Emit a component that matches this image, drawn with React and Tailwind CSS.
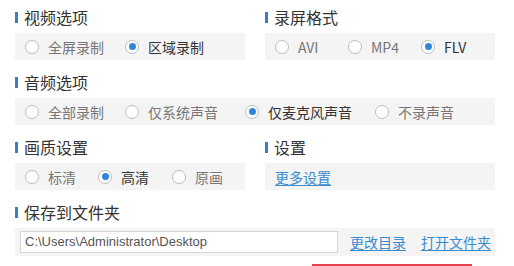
import React from 'react'

function Title({ children }) {
  return (
    <div className="h-[32px] flex items-center">
      <span className="w-[3px] h-[11px] shrink-0 bg-[#3b7ec3] mr-[6px]" />
      <span className="text-[16px] leading-none text-[#333]">{children}</span>
    </div>
  )
}

function Radio({ label, checked, width }) {
  return (
    <label className={`flex items-center shrink-0 ${width || ''}`}>
      <span className="w-[14px] h-[14px] rounded-full border border-[#bdbdbd] bg-white flex items-center justify-center">
        {checked && <span className="w-[7px] h-[7px] rounded-full bg-[#2f86d6]" />}
      </span>
      <span className={`ml-[9px] text-[14px] leading-none ${checked ? 'text-[#333]' : 'text-[#777]'}`}>{label}</span>
    </label>
  )
}

function Panel({ children, className = '' }) {
  return (
    <div className={`h-[27px] bg-[#f4f4f4] flex items-center pl-[10px] ${className}`}>
      {children}
    </div>
  )
}

export default function App() {
  return (
    <div className="w-[514px] h-[266px] bg-white overflow-hidden pt-[1px] pl-[15px] pr-[19px] font-['Microsoft_YaHei','Noto_Sans_CJK_SC',sans-serif]">
      {/* 视频 / 格式 */}
      <div className="grid grid-cols-2 gap-x-[20px] mb-[6px]">
        <div>
          <Title>视频选项</Title>
          <Panel>
            <Radio label="全屏录制" width="w-[100px]" />
            <Radio label="区域录制" checked />
          </Panel>
        </div>
        <div>
          <Title>录屏格式</Title>
          <Panel>
            <Radio label="AVI" width="w-[73px]" />
            <Radio label="MP4" width="w-[73px]" />
            <Radio label="FLV" checked />
          </Panel>
        </div>
      </div>

      {/* 音频 */}
      <div className="mb-[6px]">
        <Title>音频选项</Title>
        <Panel>
          <Radio label="全部录制" width="w-[100px]" />
          <Radio label="仅系统声音" width="w-[120px]" />
          <Radio label="仅麦克风声音" checked width="w-[130px]" />
          <Radio label="不录声音" />
        </Panel>
      </div>

      {/* 画质 / 设置 */}
      <div className="grid grid-cols-2 gap-x-[20px] mb-[6px]">
        <div>
          <Title>画质设置</Title>
          <Panel>
            <Radio label="标清" width="w-[73px]" />
            <Radio label="高清" checked width="w-[74px]" />
            <Radio label="原画" />
          </Panel>
        </div>
        <div>
          <Title>设置</Title>
          <Panel>
            <a href="#" className="text-[14px] leading-none text-[#3a8ccc] underline underline-offset-2">更多设置</a>
          </Panel>
        </div>
      </div>

      {/* 保存 */}
      <div>
        <Title>保存到文件夹</Title>
        <div className="h-[28px] bg-[#f4f4f4] flex items-center pl-[5px]">
          <div className="w-[318px] h-[22px] bg-white border border-[#d6d6d6] flex items-center pl-[4px] text-[13px] text-[#555] font-['Liberation_Sans',sans-serif]">
            C:\Users\Administrator\Desktop
          </div>
          <a href="#" className="ml-[12px] text-[14px] leading-none text-[#3a8ccc] underline underline-offset-2">更改目录</a>
          <a href="#" className="ml-[15px] text-[14px] leading-none text-[#3a8ccc] underline underline-offset-2">打开文件夹</a>
        </div>
        <div className="ml-[297px] mt-[8px] w-[160px] h-[3px] bg-[#e5434d]" />
      </div>
    </div>
  )
}
